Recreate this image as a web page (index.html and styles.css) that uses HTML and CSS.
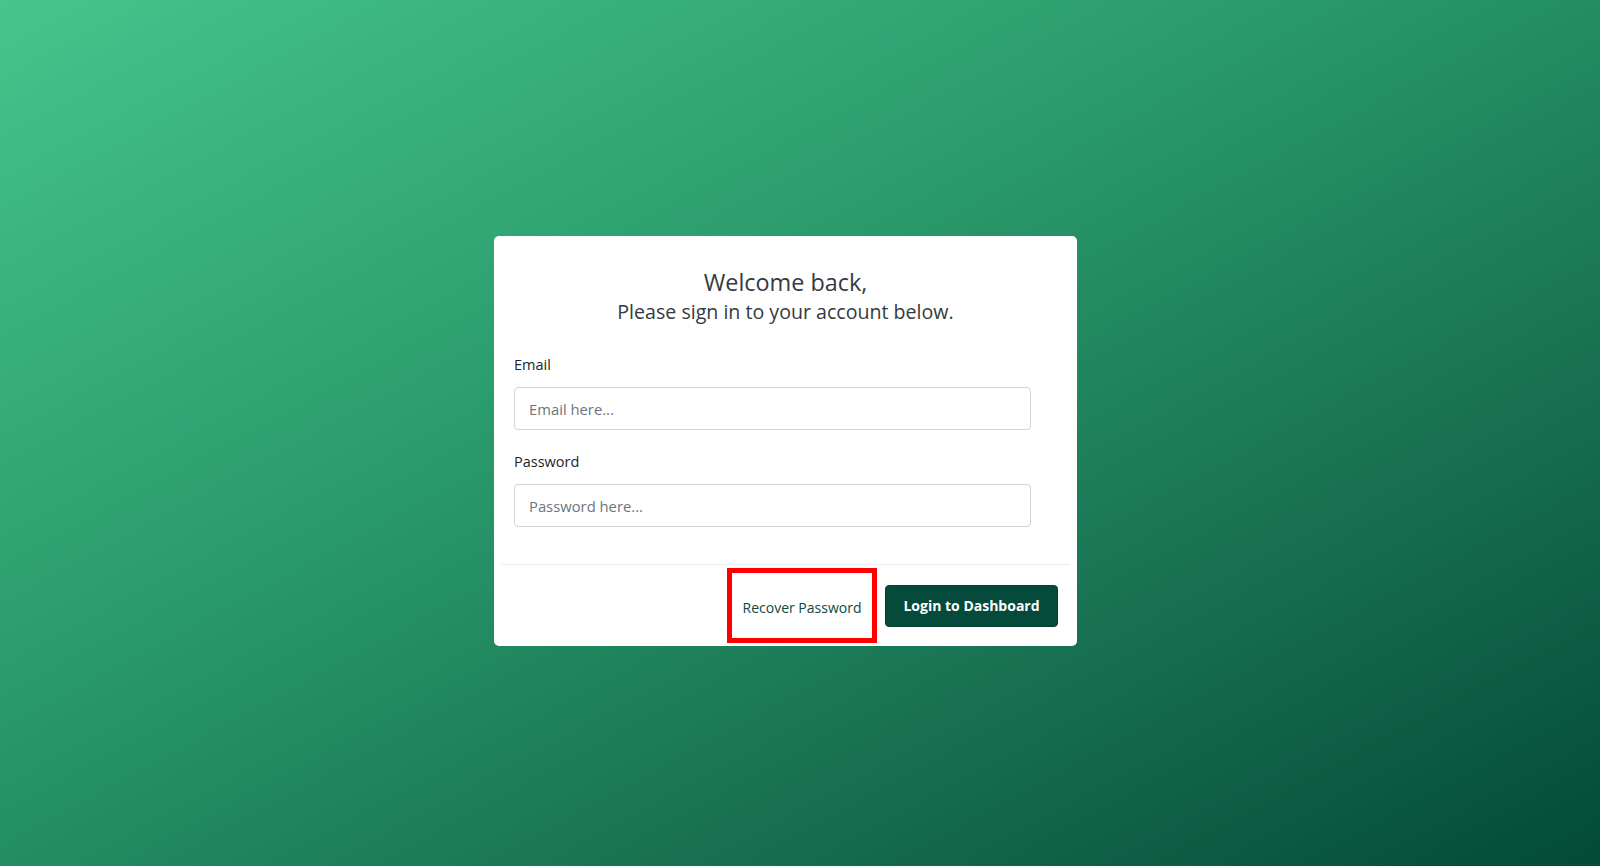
FILE: index.html
```html
<!DOCTYPE html>
<html lang="en">
<head>
<meta charset="utf-8">
<title>Login</title>
<link rel="stylesheet" href="styles.css">
</head>
<body>
<div class="page">
  <div class="card">
    <div class="card-body">
      <div class="title">
        <div class="title-main">Welcome back,</div>
        <div class="title-sub">Please sign in to your account below.</div>
      </div>
      <form class="form">
        <div class="form-group">
          <label class="label" for="email">Email</label>
          <input class="input" id="email" type="email" placeholder="Email here...">
        </div>
        <div class="form-group last">
          <label class="label" for="password">Password</label>
          <input class="input" id="password" type="password" placeholder="Password here...">
        </div>
      </form>
    </div>
    <div class="card-footer">
      <a class="recover" href="#">Recover Password</a>
      <button class="btn-login" type="button">Login to Dashboard</button>
    </div>
  </div>
</div>
</body>
</html>
```
FILE: styles.css
```css
html, body {
  margin: 0;
  height: 100%;
}
body {
  background: linear-gradient(to bottom right, #45c58c 0%, #2a9a6c 40%, #187252 70%, #034a37 100%);
  font-family: "Open Sans", "Noto Sans", "DejaVu Sans", sans-serif;
  color: #212529;
}
.page {
  box-sizing: border-box;
  height: 100%;
  display: flex;
  justify-content: center;
  align-items: flex-start;
  padding: 236px 29px 0 0;
}
.card {
  width: 583px;
  background: #fff;
  border-radius: 5px;
}
.card-body {
  padding: 31px 20px 37px 20px;
}
.title {
  text-align: center;
  color: #343a40;
  margin-bottom: 27px;
}
.title-main {
  font-size: 23.4px;
  line-height: 30px;
}
.title-sub {
  font-size: 19.6px;
  line-height: 30px;
}
.form-group {
  display: flex;
  flex-direction: column;
  align-items: flex-start;
  margin-bottom: 21px;
}
.form-group.last {
  margin-bottom: 0;
}
.label {
  font-size: 14.5px;
  line-height: 21px;
  margin-bottom: 12px;
  color: #212529;
}
.input {
  box-sizing: border-box;
  width: 517px;
  height: 43px;
  border: 1px solid #ced4da;
  border-radius: 4px;
  padding: 0 14px;
  font-family: inherit;
  font-size: 14.8px;
  color: #495057;
  background: #fff;
}
.input::placeholder {
  color: #6c757d;
}
.card-footer {
  display: flex;
  justify-content: flex-end;
  align-items: center;
  margin: 0 7px;
  border-top: 1px solid #e9ecef;
  padding: 3px 12px 3px 0;
}
.recover {
  box-sizing: border-box;
  width: 150px;
  height: 75px;
  border: 5px solid #ff0000;
  display: flex;
  align-items: center;
  justify-content: center;
  padding-top: 3px;
  font-size: 14px;
  color: #0b4a3c;
  text-decoration: none;
  margin-right: 8px;
}
.btn-login {
  box-sizing: border-box;
  width: 173px;
  height: 42px;
  border: 1px solid #043e31;
  border-radius: 4px;
  background: #054a3a;
  color: #fff;
  font-family: inherit;
  font-size: 14px;
  font-weight: 700;
  padding: 0;
}
```
